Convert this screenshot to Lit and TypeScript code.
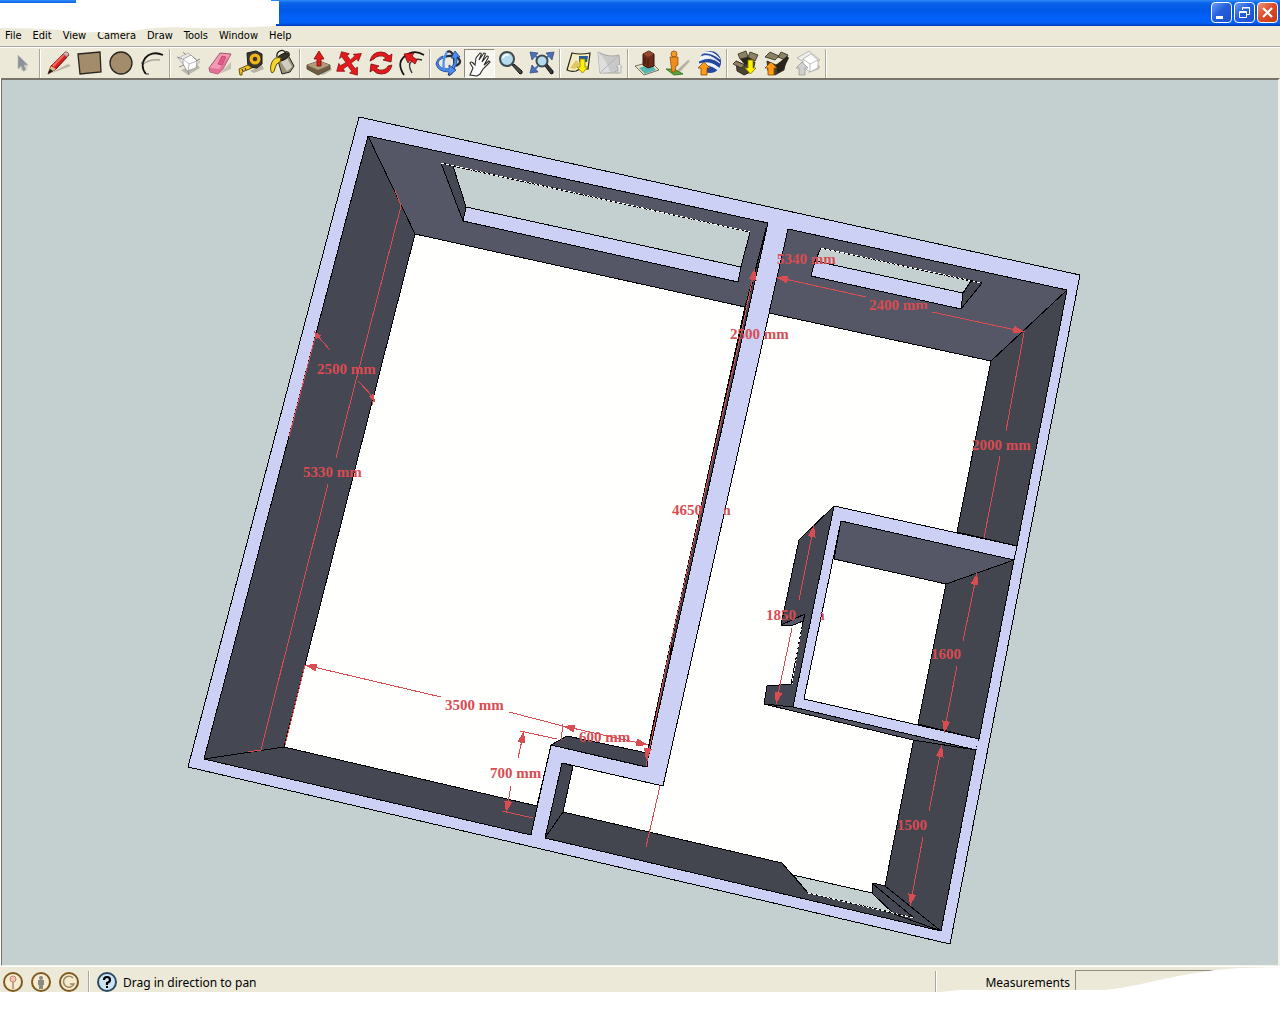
import { LitElement, html, svg, css } from "lit";
import { customElement } from "lit/decorators.js";

type Pt = [number, number];

const WALL_TOP = "#555766";
const WALL_SIDE = "#454752";
const LAVENDER = "#cbd0f4";
const SKY = "#c4cfd0";
const FLOOR = "#fffffe";

const pts = (p: Pt[]) => p.map((q) => q.join(",")).join(" ");
const face = (fill: string, ...p: Pt[]) => svg`<polygon class="face" fill=${fill} points=${pts(p)} />`;
const edge = (...p: Pt[]) => svg`<polyline class="edge" points=${pts(p)} />`;
const hidden = (a: Pt, b: Pt) => svg`
  <polyline class="edge" points=${pts([a, b])} />
  <polyline class="dash" points=${pts([a, b])} />`;
const dim = (...p: Pt[]) => svg`<polyline class="dim" points=${pts(p)} />`;

/* Arrow head with its tip at `tip`, pointing away from `from`. */
const head = (tip: Pt, from: Pt, len = 12, half = 4) => {
  const dx = tip[0] - from[0];
  const dy = tip[1] - from[1];
  const d = Math.hypot(dx, dy);
  const ux = dx / d;
  const uy = dy / d;
  const bx = tip[0] - ux * len;
  const by = tip[1] - uy * len;
  return svg`<polygon class="head" points=${pts([
    tip,
    [bx - uy * half, by + ux * half],
    [bx + uy * half, by - ux * half],
  ])} />`;
};
const arrow = (tip: Pt, from: Pt) => svg`${dim(from, tip)}${head(tip, from)}`;
const label = (x: number, y: number, text: string) => svg`<text class="label" x=${x} y=${y}>${text}</text>`;

const drawing = svg`
  <defs>
    <clipPath id="clip-4650">
      <path d="M660 490H706L700 525H660ZM724 490H745V525H724Z" />
    </clipPath>
    <clipPath id="clip-1850">
      <path d="M755 600H798V630H755ZM820 600H835V630H820Z" />
    </clipPath>
    <clipPath id="clip-2400"><path d="M860 290H935V309H918L914 314H860Z" /></clipPath>
    <clipPath id="clip-2000"><path d="M974 430H1040V460H970Z" /></clipPath>
  </defs>

  ${face(LAVENDER, [359, 117], [1080, 275], [950, 944], [188, 767])}

  <!-- left room -->
  ${face(WALL_SIDE, [368, 136], [768, 223], [646, 767], [551, 745], [531, 835], [204, 759])}
  ${face(WALL_TOP, [368, 136], [768, 223], [745, 307], [415, 234])}
  ${face(FLOOR, [415, 234], [745, 307], [671, 642], [647, 753], [567, 736], [551, 745], [537, 806], [284, 747])}
  ${edge([368, 136], [415, 234])}
  ${edge([204, 759], [284, 747])}
  ${face(SKY, [453, 166], [750, 232], [741, 267], [466, 207])}
  ${face(LAVENDER, [466, 207], [741, 267], [738, 282], [463, 221])}
  ${face(WALL_SIDE, [441, 163], [453, 166], [466, 207], [463, 221])}
  ${hidden([441, 163], [750, 232])}
  ${edge([766, 228], [745, 312], [671, 645])}
  <polyline class="edge heavy" points="671,645 670,655" />
  ${edge([668, 655], [648, 752])}

  <!-- right rooms -->
  ${face(FLOOR, [788, 229], [1067, 290], [1017, 546], [834, 506], [793, 707], [976, 750], [941, 931], [545, 838], [562, 763], [663, 786])}
  ${face(WALL_TOP, [788, 229], [1067, 290], [991, 361], [769, 313])}
  ${face("#43454f", [1067, 290], [1017, 546], [957, 532], [991, 361])}
  ${face(SKY, [821, 248], [971, 281], [963, 293], [815, 261])}
  ${face(LAVENDER, [815, 261], [963, 293], [961, 309], [811, 276])}
  ${face(WALL_SIDE, [971, 281], [982, 283], [961, 309], [963, 293])}
  ${hidden([821, 248], [982, 283])}

  <!-- bathroom -->
  ${face(WALL_SIDE, [834, 506], [799, 540], [781, 625], [805, 614], [803, 622], [791, 684], [767, 686], [764, 704], [793, 707])}
  ${face(WALL_TOP, [781, 625], [805, 614], [803, 621], [791, 626])}
  ${hidden([802, 624], [792, 684])}
  ${face(LAVENDER, [834, 506], [1017, 546], [1014, 560], [841, 521], [804, 699], [979, 739], [976, 750], [793, 707])}
  ${face(FLOOR, [841, 521], [1014, 560], [979, 739], [804, 699])}
  ${face(WALL_TOP, [841, 521], [1014, 560], [946, 584], [834, 559])}
  ${face("#43454f", [1014, 560], [979, 739], [918, 724], [946, 584])}
  <polygon fill=${LAVENDER} points="1018,547 1024,547 1022,561 1015,559" />
  <polygon fill=${LAVENDER} points="978,741 983,740 981,751 976,749" />

  <!-- lower hall -->
  ${face("#43454f", [976, 750], [941, 931], [885, 886], [914, 738])}
  ${face(WALL_TOP, [764, 704], [793, 707], [976, 750], [913, 740])}
  ${face("#43454f", [545, 838], [563, 812], [782, 863], [808, 893], [914, 918], [941, 931])}
  ${face(WALL_SIDE, [562, 763], [573, 766], [563, 812], [545, 838])}
  ${face(SKY, [793, 875], [872, 893], [894, 913], [808, 893])}
  ${face(WALL_SIDE, [873, 883], [885, 886], [941, 931], [894, 914], [872, 893])}
  ${edge([873, 884], [914, 918])}
  ${hidden([808, 893], [914, 918])}
  ${face(WALL_SIDE, [551, 745], [567, 736], [647, 753], [647, 767])}

  <!-- dimensions -->
  ${dim([395, 190], [401, 206], [336, 458])}
  ${dim([328, 484], [261, 750], [248, 752])}
  ${label(303, 477, "5330 mm")}

  ${dim([316, 334], [289, 437])}
  ${head([314, 331], [320, 339], 8, 3)}
  ${dim([316, 334], [330, 350])}
  ${dim([358, 381], [374, 398], [372, 405])}
  ${head([375, 402], [369, 391], 8, 3)}
  ${label(317, 374, "2500 mm")}

  ${arrow([305, 665], [441, 697])}
  ${dim([305, 665], [285, 745])}
  ${dim([509, 712], [563, 726])}
  ${label(445, 710, "3500 mm")}

  ${dim([563, 724], [561, 740])}
  ${dim([563, 726], [648, 745])}
  ${head([563, 726], [648, 745])}
  ${head([648, 745], [563, 726])}
  ${label(579, 742, "600 mm")}

  ${arrow([524, 731], [518, 758])}
  ${arrow([506, 813], [511, 786])}
  ${dim([520, 731], [557, 739])}
  ${dim([502, 811], [533, 818])}
  ${label(490, 778, "700 mm")}

  <polyline class="dim" points="754,272 745,315 672,638 646,766" />
  ${head([755, 268], [751, 288])}
  ${head([646, 760], [650, 736])}
  ${dim([660, 786], [646, 847])}
  <g clip-path="url(#clip-4650)">${label(672, 515, "4650 mm")}</g>
  ${label(730, 339, "2500 mm")}
  ${label(777, 264, "5340 mm")}

  ${arrow([776, 277], [866, 297])}
  ${arrow([1025, 332], [932, 312])}
  <g clip-path="url(#clip-2400)">${label(869, 310, "2400 mm")}</g>

  ${dim([1024, 333], [1006, 431])}
  ${dim([1000, 456], [984, 538])}
  <g clip-path="url(#clip-2000)">${label(972, 450, "2000 mm")}</g>

  ${arrow([814, 525], [799, 600])}
  ${arrow([776, 704], [792, 628])}
  <g clip-path="url(#clip-1850)">${label(766, 620, "1850 mm")}</g>

  ${arrow([977, 573], [963, 641])}
  ${arrow([944, 733], [957, 666])}
  ${label(931, 659, "1600")}

  ${arrow([942, 745], [929, 811])}
  ${arrow([910, 906], [923, 837])}
  ${label(897, 830, "1500")}
`;

const downArrow = (x: number, y: number) => svg`
  <path fill="#fff200" stroke="#8a7a00" stroke-width=".8" d="M${x} ${y}h5v8h3l-5.500 6-5.500-6h3z" />`;
const upArrow = (x: number, y: number, fill = "#ff9a1a", line = "#8a4a00") => svg`
  <path fill=${fill} stroke=${line} stroke-width=".8" d="M${x} ${y}h6v-7h3l-6-6-6 6h3z" />`;

const icons = {
  select: svg`
    <path d="M12 8l8 10-4 5-6-4z" fill="#d5d2c6" />
    <path d="M10 6v14l3-3 2 5 3-1-2-5h4z" fill="#8b9299" stroke="#b7babb" stroke-width=".6" />`,
  line: svg`
    <path d="M4 25L26 17l-3-2z" fill="#b9b6a8" />
    <path d="M3 25l3-8L20 3l4 3L11 20z" fill="#d81e1e" stroke="#6a0c0c" />
    <path d="M7 16L19 4l2 1L9 18z" fill="#f0655c" />
    <path d="M3 25l3-8 5 3z" fill="#d9b98a" />
    <path d="M3 25l2-5L8 22z" fill="#111" />
    <path d="M18 5l2-2q2-1 4 2l-2 3z" fill="#e9a7a0" stroke="#777" />`,
  rectangle: svg`<path d="M2 5l22-2 1 20-21 2z" fill="#a38c6c" stroke="#2a251d" stroke-width="1.300" />`,
  circle: svg`<circle cx="14" cy="14" r="11" fill="#a38c6c" stroke="#2a251d" stroke-width="1.300" />`,
  arc: svg`
    <path d="M4 16Q11 10 22 11" fill="none" stroke="#a9a79c" stroke-width="1.500" />
    <path d="M8 25C-1 15 9-1 25 6" fill="none" stroke="#111" stroke-width="1.800" />
    <path d="M3 14h3M8 25h3" stroke="#333" />`,
  component: svg`
    <path d="M6 21l7 5 12-7-3-4z" fill="#b9b7ad" />
    <path d="M3 9l10-5 12 9-11 9z" fill="#ecebe8" stroke="#b0b0ae" stroke-width=".8" />
    <path d="M8 10l8-4 6 6-1 7-9 3-4-7z" fill="#fff" stroke="#9c9c9c" stroke-width=".9" />
    <path d="M8 10l6 5 8-3M14 15l-1 7" fill="none" stroke="#a8a8a8" stroke-width=".8" />
    <path d="M2 8l5 2M8 3l3 3M25 10l-4 2M14 26l-1-4M4 18l5-2" stroke="#8e8e8e" stroke-width="1" />`,
  eraser: svg`
    <path d="M13 25l12-5v-7z" fill="#c5c2b5" />
    <path d="M3 19L14 4l11 1-8 15-5 5-8-2z" fill="#f598b4" stroke="#9b4c66" stroke-width=".9" />
    <path d="M4 19l9 1 11-14-7 14-5 5-8-2z" fill="#e27295" />
    <path d="M12 15l4-8 4 1-4 8z" fill="#e05c86" stroke="#b53e66" stroke-width=".7" />`,
  tape: svg`
    <path d="M13 22l12-6 2 4-10 4z" fill="#b6b3a6" />
    <path d="M10 4l9-2 6 3v10l-5 4-9-1z" fill="#3a3730" stroke="#1d1b17" />
    <circle cx="18" cy="10" r="5.500" fill="#f2b51c" />
    <circle cx="18" cy="10" r="2.300" fill="#3a3730" />
    <path d="M2 20l9-4 4 3-10 4v3l-2 0z" fill="#efc22a" stroke="#6d5307" />
    <path d="M5 20l1 2M8 19l1 2" stroke="#222" />`,
  paint: svg`
    <path d="M10 12l10-6 6 11-4 6-8 2z" fill="#9a947f" stroke="#25221a" />
    <path d="M13 13l6-4 5 9-5 4z" fill="#d2cebf" />
    <ellipse cx="15" cy="8" rx="6" ry="3" transform="rotate(-28 15 8)" fill="#35322a" stroke="#151310" />
    <path d="M9 8c-1-7 8-9 9-3M16 5c2-4 6-2 5 2" fill="none" stroke="#222" stroke-width="1.300" />
    <path d="M13 9q-6-2-9 4-3 7 0 11 3-1 3-5 1-5 5-6z" fill="#f3d62a" stroke="#5d5108" />`,
  pushpull: svg`
    <path d="M14 25l12-6 1 2-9 5z" fill="#b9b6a8" />
    <path d="M2 16l12-4 11 4v4l-12 6-11-6z" fill="#6f5d43" stroke="#463b29" stroke-width=".8" />
    <path d="M2 16l12-4 11 4-12 5z" fill="#b09c7b" />
    <path d="M12 17V10H9l5-8 5 8h-3v7z" fill="#e3191c" stroke="#7c0a0c" stroke-width=".8" />`,
  move: svg`
    <g transform="rotate(8 14 14)" fill="#e3191c" stroke="#8a0d10" stroke-width=".7">
      <path d="M4 4l8 1-2 2 4 4 4-5-2-1 8-2-2 8-2-2-5 5 5 5 2-2 1 8-8-1 2-2-5-5-4 4 2 2-8 1 1-8 2 2 5-4-5-5-2 2z" />
    </g>`,
  rotate: svg`
    <path d="M3 12Q5 3 14 3q5 0 8 4l3-2-1 8-8-2 3-2q-3-3-7-2-4 1-5 3z" fill="#e3191c" stroke="#7c0a0c" stroke-width=".8" />
    <path d="M25 16q-2 9-11 9-5 0-8-4l-3 2 1-8 8 2-3 2q3 3 7 2 4-1 5-4z" fill="#e3191c" stroke="#7c0a0c" stroke-width=".8" />`,
  offset: svg`
    <path d="M6 26Q-2 14 7 7 16 0 26 6" fill="none" stroke="#151515" stroke-width="1.700" />
    <path d="M14 24q-5-9 0-12 4-3 10-1" fill="none" stroke="#333" stroke-width="1.400" />
    <path d="M17 15l-5-4-2 3-4-9 10-1-2 3 5 4z" fill="#e3191c" stroke="#7c0a0c" stroke-width=".8" />`,
  orbit: svg`
    <path d="M12 3q4-2 6 3 3 9 0 15-2 5-5 4" fill="none" stroke="#272b35" stroke-width="2.300" />
    <path d="M9 8q10-3 15 2 3 4-3 7" fill="none" stroke="#272b35" stroke-width="2.300" />
    <path d="M8 9q-5 2-5 5 1 6 11 6v-4l7 5-7 6v-4Q3 23 1 15 2 9 8 7z" fill="#4c8ff0" stroke="#163f8c" stroke-width=".8" />
    <path d="M17 18q3-4 2-9h-3l4-7 5 6h-3q1 7-3 12z" fill="#4c8ff0" stroke="#163f8c" stroke-width=".8" />
    <path d="M9 21Q7 11 12 3" fill="none" stroke="#4c8ff0" stroke-width="2.300" />`,
  pan: svg`
    <path d="M4 26l3-7-3-5q1-2 3 0l2 2 1-7 4-5q2 0 1 2l-2 5 5-7q2 0 1 2l-3 7 5-6q2 0 1 2l-4 7 5-4q2 1 0 2l-6 6-3 5-3 2z" fill="#fff" stroke="#2c2c2c" stroke-width="1.100" />`,
  zoom: svg`
    <path d="M15 16l8 9q3 0 2-3l-8-7z" fill="#4c4c4c" stroke="#111" />
    <circle cx="10" cy="10" r="7" fill="#b5dbee" stroke="#3d4a52" stroke-width="2" />
    <path d="M6 9q1-4 6-3" fill="none" stroke="#fff" stroke-width="1.500" />`,
  extents: svg`
    <path d="M2 3l8 1-6 7zM26 3l-8 1 6 7zM2 24l8-1-6-7z" fill="#4d6fb4" stroke="#2a4685" stroke-width=".7" />
    <path d="M6 6l4 3M22 6l-4 3M6 21l4-4" stroke="#4d6fb4" stroke-width="2" />
    <path d="M17 17l6 8q3 0 2-3l-6-7z" fill="#3a3a3a" stroke="#111" />
    <circle cx="14" cy="12" r="5.500" fill="#b5dbee" stroke="#3d4a52" stroke-width="2" />`,
  getView: svg`
    <path d="M7 4q8 2 18 0l-2 16q-8-1-12 2-5 1-9-1z" fill="#f5ecc0" stroke="#2a2618" stroke-width="1.200" />
    <path d="M14 7h9l-1 6h-8z" fill="#265a99" />
    <path d="M5 19l6-8 4 4-5 5z" fill="#e3c566" />
    ${downArrow(15, 10)}`,
  terrain: svg`
    <path d="M2 3q11 6 21 3l1 14-7 4-13 0z" fill="#c9c9c8" stroke="#999" stroke-width=".8" />
    <path d="M2 3q9 8 12 20l-10 1z" fill="#dededd" />
    <path d="M4 24q9-9 19-18" fill="none" stroke="#aaa" stroke-width=".8" />
    <path d="M18 24h4v-6h-2l3-3 3 3h-1v6z" fill="#e8e8e6" stroke="#aaa" stroke-width=".8" />`,
  addModel: svg`
    <path d="M2 17l16-4 8 8-15 5z" fill="#e9e1c4" stroke="#5a543f" stroke-width=".8" />
    <path d="M6 19l12-4 5 6-11 4z" fill="#59b4b4" />
    <path d="M10 5l6-3 5 3v12l-6 2-5-3z" fill="#6d2c1a" stroke="#32130a" />
    <path d="M10 5l6-3 5 3-6 3z" fill="#95492f" />
    <path d="M12 9v6M15 10v7" stroke="#3a160b" />`,
  streetView: svg`
    <path d="M12 22l12-11 2 1-10 11z" fill="#b5b2a5" />
    <path d="M2 20l8 0 9 5-9 1z" fill="#59a63e" stroke="#2c6a1a" stroke-width=".8" />
    <circle cx="10" cy="5" r="3" fill="#f59b2b" stroke="#96510b" stroke-width=".8" />
    <path d="M6 8h8v8l-2 1-1 6H8l-1-7z" fill="#ef8d1c" stroke="#96510b" stroke-width=".8" />`,
  earth: svg`
    <circle cx="15" cy="13" r="11" fill="#23479e" />
    <path d="M5 8q9-5 20 6-10-8-21-2zM8 4q9-4 17 6-9-7-17-6zM4 15q11-4 20 4l-1 2Q12 13 5 18z" fill="#f0f4fc" stroke="#f0f4fc" stroke-width=".8" />
    ${upArrow(6, 26)}`,
  getModels: svg`
    <path d="M4 12l9 4 10-3-2 9-9 4-7-4z" fill="#4b4333" stroke="#1f1b13" stroke-width=".8" />
    <path d="M4 12l9 4-4 3-8-4zM6 5l8-3 2 6-8 2zM16 8l2-5 8 3-3 6z" fill="#8d8163" stroke="#2f291c" stroke-width=".8" />
    <path d="M8 10l8-2 7 4-10 4z" fill="#2a251b" />
    ${downArrow(16, 11)}`,
  shareModels: svg`
    <path d="M4 12l9 4 10-5-2 10-9 5-7-4z" fill="#4b4333" stroke="#1f1b13" stroke-width=".8" />
    <path d="M2 8l5-5 9 4-4 4zM15 8l3-5 7 3-3 5z" fill="#8d8163" stroke="#2f291c" stroke-width=".8" />
    <path d="M13 16l11-9 2 2-6 12-6 3z" fill="#29251c" />
    ${upArrow(5, 26)}`,
  shareComponent: svg`
    <path d="M14 24l11-4 1-3-5-2z" fill="#bab8ad" />
    <path d="M3 9L15 2l11 9-10 5z" fill="#eeeeec" stroke="#a9a9a7" stroke-width=".8" />
    <path d="M9 10l8-5 7 6v8l-8 4-7-5z" fill="#fff" stroke="#a9a9a7" stroke-width=".8" />
    <path d="M9 10l7 5 8-4M16 15v8" fill="none" stroke="#a9a9a7" stroke-width=".8" />
    ${upArrow(5, 26, "#cfcfcf", "#9a9a9a")}`,
};

type IconName = keyof typeof icons;

const toolGroups: [IconName, string][][] = [
  [["select", "Select"]],
  [["line", "Line"], ["rectangle", "Rectangle"], ["circle", "Circle"], ["arc", "Arc"]],
  [["component", "Make Component"], ["eraser", "Eraser"], ["tape", "Tape Measure"], ["paint", "Paint Bucket"]],
  [["pushpull", "Push/Pull"], ["move", "Move"], ["rotate", "Rotate"], ["offset", "Offset"]],
  [["orbit", "Orbit"], ["pan", "Pan"], ["zoom", "Zoom"], ["extents", "Zoom Extents"]],
  [["getView", "Get Current View"], ["terrain", "Toggle Terrain"]],
  [["addModel", "Add New Building"], ["streetView", "Photo Textures"], ["earth", "Preview in Google Earth"]],
  [["getModels", "Get Models"], ["shareModels", "Share Models"], ["shareComponent", "Share Component"]],
];

const menus = ["File", "Edit", "View", "Camera", "Draw", "Tools", "Window", "Help"];

@customElement("app-root")
export class AppRoot extends LitElement {
  static styles = css`
    :host {
      display: flex;
      flex-direction: column;
      min-height: 100vh;
      box-sizing: border-box;
      padding-bottom: 32px;
      background: #fff;
      color: #000;
      font-family: "Noto Sans", "Liberation Sans", sans-serif;
      font-size: 12px;
    }
    button {
      display: flex;
      align-items: center;
      justify-content: center;
      margin: 0;
      padding: 0;
      border: 0;
      background: none;
      color: inherit;
      font: inherit;
    }
    svg {
      display: block;
    }
    .top {
      position: relative;
      background: #ece9d8;
    }
    .titlebar {
      display: flex;
      justify-content: flex-end;
      gap: 2px;
      box-sizing: border-box;
      height: 26px;
      padding: 2px 2px 0 0;
      background: linear-gradient(#2f8cf5 0, #0a62ea 3px, #0058e6 10px, #0062fa 18px, #0060f4 23px, #0037b4 26px);
    }
    .winbtn {
      box-sizing: border-box;
      width: 21px;
      height: 21px;
      border: 1px solid #fff;
      border-radius: 4px;
      background: linear-gradient(135deg, #6b9cf4, #2560dc 45%, #1a4fce);
    }
    .close {
      background: linear-gradient(135deg, #f0957a, #dc4e2a 45%, #c43a14);
    }
    .menubar {
      display: flex;
      gap: 11px;
      height: 21px;
      padding: 0 5px 2px;
      border-bottom: 1px solid #aca899;
      box-sizing: border-box;
      font-family: "DejaVu Sans Condensed", "DejaVu Sans", sans-serif;
      font-size: 11px;
    }
    .toolbar {
      display: flex;
      align-items: center;
      height: 30px;
      padding-left: 6px;
      border-top: 1px solid #fff;
      background: #ece9d8;
    }
    .group {
      display: flex;
      align-items: center;
    }
    .group::after {
      content: "";
      width: 1px;
      height: 29px;
      margin: 0 2px;
      border-right: 1px solid #fff;
      background: #aca899;
    }
    .tool {
      width: 31px;
      height: 29px;
      box-sizing: border-box;
    }
    .pressed {
      border: 1px solid #8f8c7e;
      border-right-color: #fff;
      border-bottom-color: #fff;
      background: #f6f5ee;
    }
    .scrap {
      position: absolute;
      left: 0;
      pointer-events: none;
    }
    .scrap-top {
      top: 0;
    }
    .canvas {
      display: flex;
      flex: 1 1 auto;
      min-height: 300px;
      margin-left: 1px;
      border-style: solid;
      border-width: 2px 2px 1px 1px;
      border-color: #77756b #f4f3ea #f4f3ea #77756b;
      background: #c4cfd0;
    }
    .plan {
      flex: 1 1 0;
      min-width: 0;
    }
    .face {
      stroke: #000;
      stroke-width: 1;
      stroke-linejoin: round;
    }
    .edge {
      fill: none;
      stroke: #000;
    }
    .heavy {
      stroke-width: 3;
    }
    .dash {
      fill: none;
      stroke: #fff;
      stroke-dasharray: 3 2;
    }
    .dim {
      fill: none;
      stroke: #d84c52;
    }
    .head {
      fill: #d84c52;
    }
    .label {
      fill: #d84c52;
      font: bold 15px "Liberation Serif", serif;
    }
    .status {
      position: relative;
      display: flex;
      align-items: center;
      height: 26px;
      border-top: 1px solid #fff;
      box-sizing: border-box;
      background: #ece9d8;
    }
    .badges {
      display: flex;
      gap: 8px;
      padding: 4px 9px 0 3px;
    }
    .rule {
      align-self: stretch;
      width: 1px;
      margin-top: 4px;
      border-right: 1px solid #fff;
      background: #aca899;
    }
    .help {
      padding: 4px 6px 0 7px;
    }
    .hint {
      flex: 1;
      padding-top: 6px;
      line-height: 18px;
    }
    .measure {
      display: flex;
      align-items: center;
      justify-content: flex-end;
      width: 343px;
      align-self: stretch;
    }
    .measure label {
      padding: 6px 5px 0 0;
      line-height: 18px;
    }
    .measure input {
      align-self: stretch;
      width: 205px;
      margin: 3px 0 0;
      padding: 0 4px;
      box-sizing: border-box;
      border: 0;
      border-top: 1px solid #8f8c7e;
      border-left: 1px solid #8f8c7e;
      background: #ece9d8;
      font: inherit;
    }
    .scrap-bottom {
      left: auto;
      right: 0;
      bottom: 0;
    }
  `;

  render() {
    return html`
      <header class="top">
        <div class="titlebar">
          <button class="winbtn" aria-label="Minimize">
            <svg width="19" height="19"><path d="M4 13h7v3H4z" fill="#fff" /></svg>
          </button>
          <button class="winbtn" aria-label="Restore">
            <svg width="19" height="19" fill="none" stroke="#fff">
              <path d="M7.500 7V4.500h7v7H12M7 5h8" />
              <path d="M4.500 8.500h7v6h-7zM4 9.500h8" />
            </svg>
          </button>
          <button class="winbtn close" aria-label="Close">
            <svg width="19" height="19"><path d="M5 5l9 9M14 5l-9 9" stroke="#fff" stroke-width="2.200" /></svg>
          </button>
        </div>
        <nav class="menubar">${menus.map((m) => html`<button>${m}</button>`)}</nav>
        <svg class="scrap scrap-top" width="280" height="34" aria-hidden="true">
          <path d="M0 3H76V0H271V1H279V24H276V26Q240 28 200 28Q160 26 140 30Q120 33 96 32Q76 33 62 30Q30 28 0 28Z" fill="#fff" />
        </svg>
      </header>
      <div class="toolbar" role="toolbar">
        ${toolGroups.map(
          (group) => html`<div class="group">
            ${group.map(
              ([name, title]) => html`<button class="tool ${name === "pan" ? "pressed" : ""}" aria-label=${title}>
                <svg width="28" height="28" viewBox="0 0 28 28">${icons[name]}</svg>
              </button>`
            )}
          </div>`
        )}
      </div>
      <main class="canvas">
        <svg class="plan" viewBox="2 80 1276 885" shape-rendering="crispEdges" role="img" aria-label="Floor plan">
          ${drawing}
        </svg>
      </main>
      <footer class="status">
        <div class="badges">
          <button aria-label="Geo-location">
            <svg width="20" height="20">
              <circle cx="10" cy="10" r="9" fill="#f7ebcf" stroke="#7d5a22" stroke-width="2" />
              <circle cx="10" cy="7" r="3" fill="#f0c3b4" stroke="#c08d7c" />
              <path d="M10 10v7" stroke="#b08c80" stroke-width="1.500" />
            </svg>
          </button>
          <button aria-label="Credits">
            <svg width="20" height="20">
              <circle cx="10" cy="10" r="9" fill="#f7ebcf" stroke="#7d5a22" stroke-width="2" />
              <circle cx="10" cy="6" r="2" fill="#8b8b83" />
              <path d="M7 8h6v5h-1v4H8v-4H7z" fill="#8b8b83" />
            </svg>
          </button>
          <button aria-label="Sign in">
            <svg width="20" height="20">
              <circle cx="10" cy="10" r="9" fill="#f7ebcf" stroke="#7d5a22" stroke-width="2" />
              <path d="M14 6a5.500 5.500 0 1 0 1 6h-4" fill="none" stroke="#a08a68" stroke-width="1.600" />
            </svg>
          </button>
        </div>
        <span class="rule"></span>
        <button class="help" aria-label="Help">
          <svg width="20" height="20">
            <circle cx="10" cy="10" r="9" fill="#cfe4f3" stroke="#2c4a63" stroke-width="2" />
            <path d="M7 8q0-3 3-3t3 3q0 2-3 3v2" fill="none" stroke="#000" stroke-width="2.200" />
            <path d="M9 14h2v2H9z" />
          </svg>
        </button>
        <span class="hint">Drag in direction to pan</span>
        <span class="rule"></span>
        <div class="measure">
          <label for="measurements">Measurements</label>
          <input id="measurements" type="text" />
        </div>
        <svg class="scrap scrap-bottom" width="340" height="26" aria-hidden="true">
          <path d="M0 26L20 24H165Q190 21 210 16Q240 9 275 4L300 2L340 1V26Z" fill="#fff" />
        </svg>
      </footer>
    `;
  }
}
